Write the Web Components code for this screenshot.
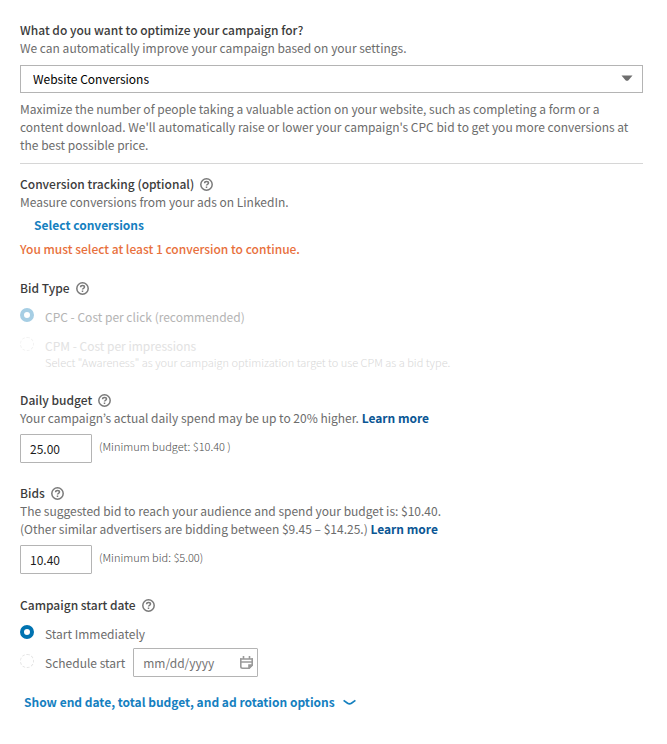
<!DOCTYPE html>
<html lang="en">
<head>
<meta charset="utf-8">
<meta name="viewport" content="width=device-width, initial-scale=1">
<title>Campaign budget and schedule</title>
<style>
html { background: #fff; }
body { margin: 0; font: 12px/18px "Noto Sans CJK KR", "Open Sans", sans-serif; color: #6c6c6c; }
</style>
</head>
<body>
<campaign-form></campaign-form>
<script>
const base = `
  * { box-sizing: border-box; }
  [hidden] { display: none; }
  .title { display: flex; align-items: center; gap: 6px; margin: 0; font-size: inherit; font-weight: 500; color: #3c3c3c; }
  p { margin: 0; }
  input, select, button { font: inherit; margin: 0; }
  input:focus-visible, select:focus-visible, button:focus-visible { outline: 2px solid #0073b1; outline-offset: 1px; }
`;

function define(name, css, html, setup) {
  const template = document.createElement('template');
  template.innerHTML = `<style>${base}${css}</style>${html}`;
  customElements.define(name, class extends HTMLElement {
    connectedCallback() {
      if (this.shadowRoot) return;
      const root = this.attachShadow({ mode: 'open' });
      root.append(template.content.cloneNode(true));
      if (setup) setup(this, root);
    }
  });
}

define('help-button', `
  :host { display: flex; }
  button { display: flex; padding: 0; border: 0; background: none; cursor: pointer; }
`, `
  <button type="button" aria-label="Help">
    <svg width="13" height="13" viewBox="0 0 13 13" fill="none" stroke="#7a7a7a" stroke-width="1.5">
      <circle cx="6.5" cy="6.5" r="5.7"/>
      <path d="M4.6 5.3C4.6 4.1 5.3 3.6 6.5 3.6S8.5 4.2 8.5 5.1C8.5 6.4 6.5 6.2 6.5 7.6"/>
      <path d="M6.5 8.5V10"/>
    </svg>
  </button>
`);

define('section-title', `:host { display: block; }`, `
  <h2 class="title"><slot></slot><help-button></help-button></h2>
`);

define('goal-select', `
  :host { display: block; }
  .box { position: relative; margin: 8px 0 7px; }
  select { display: block; width: 100%; height: 28px; padding: 0 32px 0 12px; border: 1px solid #b4b4b4; border-radius: 0; background: #fff; color: #000; appearance: none; }
  svg { position: absolute; right: 10px; top: 10px; pointer-events: none; }
`, `
  <label class="title" for="goal">What do you want to optimize your campaign for?</label>
  <p>We can automatically improve your campaign based on your settings.</p>
  <div class="box">
    <select id="goal"><option>Website Conversions</option></select>
    <svg width="12" height="7" viewBox="0 0 12 7"><path d="M0.5 0.5H11.5L7.5 5.2Q6 6.5 4.5 5.2Z" fill="#6e6e6e"/></svg>
  </div>
  <p><slot></slot></p>
`);

define('choice-row', `
  :host { display: block; }
  .row { display: flex; align-items: flex-start; gap: 11px; }
  input { flex: none; appearance: none; width: 14px; height: 14px; border: 1px dashed #e4e4e4; border-radius: 50%; background: #fff; }
  input:checked { border: 4px solid #0073b1; }
  :host([disabled]) label { color: #b4b4b4; }
  :host([disabled]) input:checked { border-color: #a6cee4; }
  :host([faint]) label { color: #e2e2e2; }
  :host([faint]) input { border-color: #f2f2f2; }
  ::slotted(small) { display: block; font-size: 11px; line-height: 14px; font-weight: 300; color: #d8d8d8; }
`, `
  <div class="row"><input type="radio" id="choice"><label for="choice"><slot></slot></label></div>
`, (host, root) => {
  const input = root.querySelector('input');
  input.checked = host.hasAttribute('checked');
  input.disabled = host.hasAttribute('disabled');
  input.addEventListener('change', () => {
    for (const other of host.closest('section').querySelectorAll('choice-row')) {
      if (other !== host) other.shadowRoot.querySelector('input').checked = false;
    }
  });
});

define('amount-field', `
  :host { display: block; }
  .entry { display: flex; align-items: flex-start; gap: 7px; margin-top: 7px; }
  input { width: 72px; height: 29px; padding: 0 9px; border: 1px solid #b4b4b4; border-radius: 1px; background: #fff; color: #1c1c1c; }
  .note { padding-top: 3px; font-size: 11px; font-weight: 300; color: #4c4c4c; }
`, `
  <div class="title"><label for="amount"></label><help-button></help-button></div>
  <p><slot></slot></p>
  <div class="entry"><input id="amount" type="text" inputmode="decimal" aria-describedby="note"><span class="note" id="note"></span></div>
`, (host, root) => {
  root.querySelector('label').textContent = host.getAttribute('label');
  root.querySelector('input').value = host.getAttribute('value');
  root.querySelector('.note').textContent = host.getAttribute('note');
});

define('date-field', `
  :host { display: block; width: 125px; }
  .box { display: flex; align-items: center; height: 29px; padding: 0 4px 0 9px; border: 1px solid #b4b4b4; border-radius: 1px; background: #fff; }
  input { flex: 1; min-width: 0; padding: 0; border: 0; background: none; color: #434343; }
  input::placeholder { color: #737373; opacity: 1; }
  button { display: flex; padding: 0; border: 0; background: none; cursor: pointer; }
`, `
  <div class="box">
    <input type="text" placeholder="mm/dd/yyyy" aria-label="Start date">
    <button type="button" aria-label="Open calendar">
      <svg width="13" height="13" viewBox="0 0 13 13" fill="none" stroke="#9a9a9a" stroke-width="1.6">
        <path d="M0.8 2.2V10.5Q0.8 12.2 2.6 12.2H9.2L12.2 9.2V2.2"/>
        <path d="M0 3H13M0.8 6H12.2"/><path d="M3.5 0V3M9.5 0V3"/>
        <path d="M9 12V9H12Z" fill="#9a9a9a"/>
      </svg>
    </button>
  </div>
`);

define('link-button', `
  :host { display: block; }
  button { display: flex; align-items: center; gap: 8px; padding: 0; border: 0; background: none; color: #1580bf; font-weight: 700; cursor: pointer; }
`, `<button type="button"><slot></slot></button>`);

define('campaign-form', `
  :host { display: block; padding: 21px 24px 32px 20px; }
  form { display: flex; flex-direction: column; gap: 21px; }
  hr { width: 100%; height: 1px; margin: -12px 0 -10px; border: 0; background: #d6d6d6; }
  .select-action { padding: 5px 0 6px 14px; }
  .error { color: #e8703c; font-weight: 500; }
  .choices { display: flex; flex-direction: column; gap: 11px; margin-top: 11px; }
  .bids { padding-bottom: 1px; }
  .schedule { display: flex; align-items: center; gap: 8px; margin: -6px 0; }
  a { color: #0a5694; font-weight: 700; text-decoration: none; }
  a:hover { text-decoration: underline; }
  .more { padding: 1px 4px; }
`, `
  <form>
    <goal-select>Maximize the number of people taking a valuable action on your website, such as completing a form or a content download. We'll automatically raise or lower your campaign's CPC bid to get you more conversions at the best possible price.</goal-select>
    <hr>
    <section>
      <section-title>Conversion tracking (optional)</section-title>
      <p>Measure conversions from your ads on LinkedIn.</p>
      <link-button class="select-action">Select conversions</link-button>
      <p class="error" role="alert">You must select at least 1 conversion to continue.</p>
    </section>
    <section class="bids">
      <section-title>Bid Type</section-title>
      <div class="choices">
        <choice-row checked disabled>CPC - Cost per click (recommended)</choice-row>
        <choice-row disabled faint>CPM - Cost per impressions<small>Select "Awareness" as your campaign optimization target to use CPM as a bid type.</small></choice-row>
      </div>
    </section>
    <amount-field label="Daily budget" value="25.00" note="(Minimum budget: $10.40 )">Your campaign’s actual daily spend may be up to 20% higher. <a href="#budget">Learn more</a></amount-field>
    <amount-field class="bids" label="Bids" value="10.40" note="(Minimum bid: $5.00)">The suggested bid to reach your audience and spend your budget is: $10.40.<br>(Other similar advertisers are bidding between $9.45 – $14.25.) <a href="#bids">Learn more</a></amount-field>
    <section>
      <section-title>Campaign start date</section-title>
      <div class="choices">
        <choice-row checked>Start Immediately</choice-row>
        <div class="schedule"><choice-row>Schedule start</choice-row><date-field></date-field></div>
      </div>
    </section>
    <link-button class="more">Show end date, total budget, and ad rotation options
      <svg width="13" height="7" viewBox="0 0 13 7" fill="none" stroke="#1580bf" stroke-width="1.7"><path d="M0.6 1.4L4.6 4.3Q6.5 5.6 8.4 4.3L12.4 1.4"/></svg>
    </link-button>
  </form>
`);
</script>
</body>
</html>
